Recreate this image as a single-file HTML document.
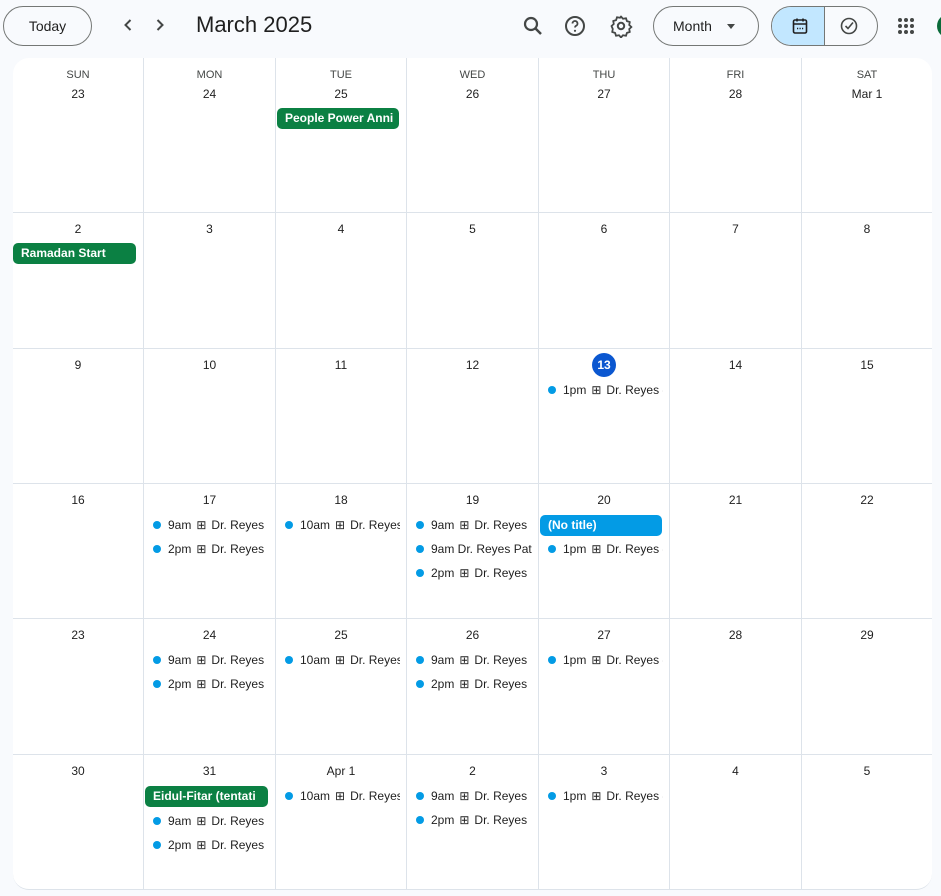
<!DOCTYPE html>
<html><head><meta charset="utf-8">
<style>
*{box-sizing:border-box;margin:0;padding:0}
body{width:941px;height:896px;background:#f8fafd;font-family:"Liberation Sans",sans-serif;color:#1f1f1f;position:relative;overflow:hidden}
.abs{position:absolute}
.btn{position:absolute;border:1px solid #747775;border-radius:20px;height:40px;top:6px;display:flex;align-items:center;justify-content:center;font-size:14px;color:#1f1f1f}
.card{position:absolute;left:13px;top:58px;width:919px;height:832px;background:#fff;border-radius:16px;overflow:hidden;border-bottom:1px solid #dde3ea}
.c{position:absolute;border-left:1px solid #dde3ea;border-top:1px solid #dde3ea;overflow:hidden}
.d{position:absolute;left:0;right:0;text-align:center;font-size:12px;color:#1f1f1f}
.h{position:absolute;left:0;right:0;text-align:center;font-size:11px;color:#444746;top:11px}
.chip{position:absolute;left:1px;right:7px;height:21px;border-radius:5px;color:#fff;font-size:12px;font-weight:bold;padding-left:8px;line-height:21px;white-space:nowrap;overflow:hidden}
.gr{background:#0b8043}.bl{background:#039be5}
.ev{position:absolute;left:9px;right:6px;height:18px;line-height:18px;font-size:12px;color:#1f1f1f;white-space:nowrap;overflow:hidden}
.ev i{display:inline-block;width:8px;height:8px;border-radius:50%;background:#039be5;margin-right:7px;vertical-align:0}
.ev b{font-weight:normal;font-size:12px;margin:0 5px}
</style></head><body>
<div class="btn" style="left:3px;width:89px;font-size:14px">Today</div>
<svg class="abs" style="left:119px;top:16px" width="18" height="18" viewBox="0 0 18 18"><path d="M11.5 4L6.5 9l5 5" fill="none" stroke="#444746" stroke-width="2"/></svg>
<svg class="abs" style="left:151px;top:16px" width="18" height="18" viewBox="0 0 18 18"><path d="M6.5 4l5 5-5 5" fill="none" stroke="#444746" stroke-width="2"/></svg>
<div class="abs" style="left:196px;top:12px;font-size:22px;color:#1f1f1f">March 2025</div>
<svg class="abs" style="left:521px;top:14px" width="24" height="24" viewBox="0 0 24 24"><circle cx="10" cy="10" r="6" fill="none" stroke="#444746" stroke-width="2.2"/><path d="M14.5 14.5L20 20" stroke="#444746" stroke-width="2.5"/></svg>
<svg class="abs" style="left:563px;top:14px" width="24" height="24" viewBox="0 0 24 24"><circle cx="12" cy="12" r="9" fill="none" stroke="#444746" stroke-width="2"/><path d="M9.5 9.5a2.5 2.5 0 1 1 3.5 2.3c-.7.4-1 .9-1 1.7" fill="none" stroke="#444746" stroke-width="1.8"/><circle cx="12" cy="16.8" r="1.1" fill="#444746"/></svg>
<svg class="abs" style="left:609px;top:14px" width="24" height="24" viewBox="0 0 24 24"><circle cx="12" cy="12" r="3.2" fill="none" stroke="#444746" stroke-width="2"/><path d="M12 2.5l2 2.3 3-.6.9 2.9 2.9.9-.6 3 2.3 2-2.3 2 .6 3-2.9.9-.9 2.9-3-.6-2 2.3-2-2.3-3 .6-.9-2.9-2.9-.9.6-3L2.5 12l2.3-2-.6-3 2.9-.9.9-2.9 3 .6z" fill="none" stroke="#444746" stroke-width="1.8" stroke-linejoin="round"/></svg>
<div class="btn" style="left:653px;width:106px;justify-content:flex-start;padding-left:19px">Month<span style="position:absolute;left:73px;top:17px;border:4px solid transparent;border-top:5px solid #444746"></span></div>
<div class="btn" style="left:771px;width:107px;overflow:hidden;justify-content:flex-start">
<div style="width:53px;height:40px;background:#c2e7ff;border-right:1px solid #747775"></div></div>
<svg class="abs" style="left:790px;top:16px" width="20" height="20" viewBox="0 0 20 20"><rect x="3.5" y="4" width="13" height="13" rx="1.5" fill="none" stroke="#1f1f1f" stroke-width="1.6"/><path d="M3.5 8h13M7 2.5v3M13 2.5v3" stroke="#1f1f1f" stroke-width="1.6"/><path d="M7 12.5h1.2M9.5 12.5h1.2M12 12.5h1.2" stroke="#1f1f1f" stroke-width="1.4"/></svg>
<svg class="abs" style="left:839px;top:16px" width="20" height="20" viewBox="0 0 20 20"><circle cx="10" cy="10" r="7.5" fill="none" stroke="#444746" stroke-width="1.6"/><path d="M6.5 10l2.5 2.5 5-6" fill="none" stroke="#444746" stroke-width="1.6"/></svg>
<svg class="abs" style="left:897px;top:17px" width="18" height="18" viewBox="0 0 18 18" fill="#444746"><circle cx="3" cy="3" r="2"/><circle cx="9" cy="3" r="2"/><circle cx="15" cy="3" r="2"/><circle cx="3" cy="9" r="2"/><circle cx="9" cy="9" r="2"/><circle cx="15" cy="9" r="2"/><circle cx="3" cy="15" r="2"/><circle cx="9" cy="15" r="2"/><circle cx="15" cy="15" r="2"/></svg>
<div class="abs" style="left:937px;top:14px;width:24px;height:24px;border-radius:50%;background:#0b6b3a"></div>

<div class="card">
<div class="c" style="left:0;top:0;width:130px;height:154px;border-left:0;border-top:0"><div class="h">SUN</div><div class="d" style="top:29px">23</div></div>
<div class="c" style="left:130px;top:0;width:132px;height:154px;border-top:0"><div class="h">MON</div><div class="d" style="top:29px">24</div></div>
<div class="c" style="left:262px;top:0;width:131px;height:154px;border-top:0"><div class="h">TUE</div><div class="d" style="top:29px">25</div><div class="chip gr" style="top:50px">People Power Anni</div></div>
<div class="c" style="left:393px;top:0;width:132px;height:154px;border-top:0"><div class="h">WED</div><div class="d" style="top:29px">26</div></div>
<div class="c" style="left:525px;top:0;width:131px;height:154px;border-top:0"><div class="h">THU</div><div class="d" style="top:29px">27</div></div>
<div class="c" style="left:656px;top:0;width:132px;height:154px;border-top:0"><div class="h">FRI</div><div class="d" style="top:29px">28</div></div>
<div class="c" style="left:788px;top:0;width:131px;height:154px;border-top:0"><div class="h">SAT</div><div class="d" style="top:29px">Mar 1</div></div>

<div class="c" style="left:0;top:154px;width:130px;height:136px;border-left:0"><div class="d" style="top:9px">2</div><div class="chip gr" style="top:30px;left:0;right:7px">Ramadan Start</div></div>
<div class="c" style="left:130px;top:154px;width:132px;height:136px"><div class="d" style="top:9px">3</div></div>
<div class="c" style="left:262px;top:154px;width:131px;height:136px"><div class="d" style="top:9px">4</div></div>
<div class="c" style="left:393px;top:154px;width:132px;height:136px"><div class="d" style="top:9px">5</div></div>
<div class="c" style="left:525px;top:154px;width:131px;height:136px"><div class="d" style="top:9px">6</div></div>
<div class="c" style="left:656px;top:154px;width:132px;height:136px"><div class="d" style="top:9px">7</div></div>
<div class="c" style="left:788px;top:154px;width:131px;height:136px"><div class="d" style="top:9px">8</div></div>

<div class="c" style="left:0;top:290px;width:130px;height:135px;border-left:0"><div class="d" style="top:9px">9</div></div>
<div class="c" style="left:130px;top:290px;width:132px;height:135px"><div class="d" style="top:9px">10</div></div>
<div class="c" style="left:262px;top:290px;width:131px;height:135px"><div class="d" style="top:9px">11</div></div>
<div class="c" style="left:393px;top:290px;width:132px;height:135px"><div class="d" style="top:9px">12</div></div>
<div class="c" style="left:525px;top:290px;width:131px;height:135px"><div style="position:absolute;left:53px;top:4px;width:24px;height:24px;border-radius:50%;background:#0b57d0;color:#fff;font-size:12px;font-weight:bold;text-align:center;line-height:24px">13</div><div class="ev" style="top:32px"><i></i>1pm<b>⊞</b>Dr. Reyes - Patient</div></div>
<div class="c" style="left:656px;top:290px;width:132px;height:135px"><div class="d" style="top:9px">14</div></div>
<div class="c" style="left:788px;top:290px;width:131px;height:135px"><div class="d" style="top:9px">15</div></div>

<div class="c" style="left:0;top:425px;width:130px;height:135px;border-left:0"><div class="d" style="top:9px">16</div></div>
<div class="c" style="left:130px;top:425px;width:132px;height:135px"><div class="d" style="top:9px">17</div><div class="ev" style="top:32px"><i></i>9am<b>⊞</b>Dr. Reyes</div><div class="ev" style="top:56px"><i></i>2pm<b>⊞</b>Dr. Reyes</div></div>
<div class="c" style="left:262px;top:425px;width:131px;height:135px"><div class="d" style="top:9px">18</div><div class="ev" style="top:32px"><i></i>10am<b>⊞</b>Dr. Reyes - P</div></div>
<div class="c" style="left:393px;top:425px;width:132px;height:135px"><div class="d" style="top:9px">19</div><div class="ev" style="top:32px"><i></i>9am<b>⊞</b>Dr. Reyes</div><div class="ev" style="top:56px"><i></i>9am Dr. Reyes Patient</div><div class="ev" style="top:80px"><i></i>2pm<b>⊞</b>Dr. Reyes</div></div>
<div class="c" style="left:525px;top:425px;width:131px;height:135px"><div class="d" style="top:9px">20</div><div class="chip bl" style="top:31px">(No title)</div><div class="ev" style="top:56px"><i></i>1pm<b>⊞</b>Dr. Reyes - Patient</div></div>
<div class="c" style="left:656px;top:425px;width:132px;height:135px"><div class="d" style="top:9px">21</div></div>
<div class="c" style="left:788px;top:425px;width:131px;height:135px"><div class="d" style="top:9px">22</div></div>

<div class="c" style="left:0;top:560px;width:130px;height:136px;border-left:0"><div class="d" style="top:9px">23</div></div>
<div class="c" style="left:130px;top:560px;width:132px;height:136px"><div class="d" style="top:9px">24</div><div class="ev" style="top:32px"><i></i>9am<b>⊞</b>Dr. Reyes</div><div class="ev" style="top:56px"><i></i>2pm<b>⊞</b>Dr. Reyes</div></div>
<div class="c" style="left:262px;top:560px;width:131px;height:136px"><div class="d" style="top:9px">25</div><div class="ev" style="top:32px"><i></i>10am<b>⊞</b>Dr. Reyes - P</div></div>
<div class="c" style="left:393px;top:560px;width:132px;height:136px"><div class="d" style="top:9px">26</div><div class="ev" style="top:32px"><i></i>9am<b>⊞</b>Dr. Reyes</div><div class="ev" style="top:56px"><i></i>2pm<b>⊞</b>Dr. Reyes</div></div>
<div class="c" style="left:525px;top:560px;width:131px;height:136px"><div class="d" style="top:9px">27</div><div class="ev" style="top:32px"><i></i>1pm<b>⊞</b>Dr. Reyes - Patient</div></div>
<div class="c" style="left:656px;top:560px;width:132px;height:136px"><div class="d" style="top:9px">28</div></div>
<div class="c" style="left:788px;top:560px;width:131px;height:136px"><div class="d" style="top:9px">29</div></div>

<div class="c" style="left:0;top:696px;width:130px;height:136px;border-left:0"><div class="d" style="top:9px">30</div></div>
<div class="c" style="left:130px;top:696px;width:132px;height:136px"><div class="d" style="top:9px">31</div><div class="chip gr" style="top:31px">Eidul-Fitar (tentati</div><div class="ev" style="top:57px"><i></i>9am<b>⊞</b>Dr. Reyes</div><div class="ev" style="top:81px"><i></i>2pm<b>⊞</b>Dr. Reyes</div></div>
<div class="c" style="left:262px;top:696px;width:131px;height:136px"><div class="d" style="top:9px">Apr 1</div><div class="ev" style="top:32px"><i></i>10am<b>⊞</b>Dr. Reyes - P</div></div>
<div class="c" style="left:393px;top:696px;width:132px;height:136px"><div class="d" style="top:9px">2</div><div class="ev" style="top:32px"><i></i>9am<b>⊞</b>Dr. Reyes</div><div class="ev" style="top:56px"><i></i>2pm<b>⊞</b>Dr. Reyes</div></div>
<div class="c" style="left:525px;top:696px;width:131px;height:136px"><div class="d" style="top:9px">3</div><div class="ev" style="top:32px"><i></i>1pm<b>⊞</b>Dr. Reyes - Patient</div></div>
<div class="c" style="left:656px;top:696px;width:132px;height:136px"><div class="d" style="top:9px">4</div></div>
<div class="c" style="left:788px;top:696px;width:131px;height:136px"><div class="d" style="top:9px">5</div></div>
</div>
</body></html>
